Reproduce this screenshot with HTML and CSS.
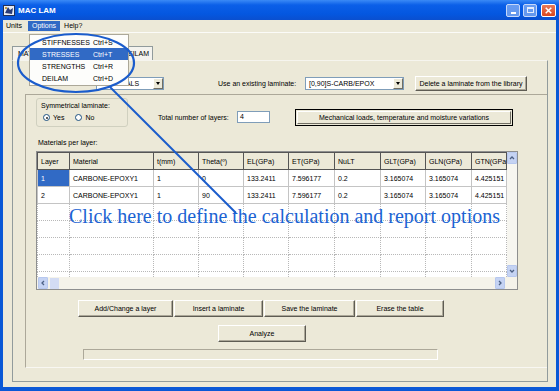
FILE: index.html
```html
<html>
  <head>
    <title>MAC LAM</title>
    <link rel="stylesheet" href="styles.css">
  </head>
  <body>
    <div class="window">
      <div class="titlebar">
        <svg class="app-icon" viewBox="0 0 12 11">
          <rect x="0.5" y="0.5" width="11" height="10" fill="#e8ecf4" stroke="#20305a"/>
          <path d="M2 8 L5 2 L7 5 L10 3 L9 9 Z" fill="#2a3c78"/>
          <rect x="2" y="2" width="2" height="2" fill="#c8a040"/>
        </svg>
        <span class="title">MAC LAM</span>
        <div class="caption-btns">
          <span class="cap-btn"><i class="cap-min"></i></span>
          <span class="cap-btn"><i class="cap-max"></i></span>
          <span class="cap-btn cap-close">
            <svg viewBox="0 0 14 13"><path d="M4 3.5 L10 9.5 M10 3.5 L4 9.5" stroke="#fff" stroke-width="1.6"/></svg>
          </span>
        </div>
      </div>

      <div class="client">
        <div class="menubar">
          <span class="menu-item">Units</span>
          <span class="menu-item active">Options</span>
          <span class="menu-item">Help?</span>
        </div>

        <div class="tabs">
          <span class="tab tab-mat">MATERIALS</span>
          <span class="tab tab-lam">LAMINATE</span>
          <span class="tab tab-del">DEILAM</span>
        </div>

        <div class="page">
          <div class="lib-row">
            <div class="combo combo-mat"><span>MATERIALS</span><i class="drop"></i></div>
            <span class="lib-label">Use an existing laminate:</span>
            <div class="combo combo-lam"><span>[0,90]S-CARB/EPOX</span><i class="drop"></i></div>
            <div class="btn btn-delete">Delete a laminate from the library</div>
          </div>

          <div class="frame">
            <div class="opts-row">
              <div class="groupbox">
                <div>Symmetrical laminate:</div>
                <div class="radios">
                  <span class="radio on"></span><span class="radio-text">Yes</span>
                  <span class="radio"></span><span class="radio-text">No</span>
                </div>
              </div>
              <span class="layers-label">Total number of layers:</span>
              <div class="textbox">4</div>
              <div class="btn btn-default"><span>Mechanical loads, temperature and moisture variations</span></div>
            </div>

            <div class="grid-label">Materials per layer:</div>

            <div class="grid">
              <div class="grid-body">
                <table>
                  <colgroup>
                    <col style="width:32px"><col style="width:84px"><col style="width:45px"><col style="width:45px"><col style="width:45px">
                    <col style="width:46px"><col style="width:46px"><col style="width:45px"><col style="width:46px"><col style="width:35px">
                  </colgroup>
                  <tr>
                    <th>Layer</th><th>Material</th><th>t(mm)</th><th>Theta(º)</th><th>EL(GPa)</th>
                    <th>ET(GPa)</th><th>NuLT</th><th>GLT(GPa)</th><th>GLN(GPa)</th><th>GTN(GPa)</th>
                  </tr>
                  <tr>
                    <td class="sel">1</td><td>CARBONE-EPOXY1</td><td>1</td><td>0</td><td>133.2411</td>
                    <td>7.596177</td><td>0.2</td><td>3.165074</td><td>3.165074</td><td>4.425151</td>
                  </tr>
                  <tr>
                    <td>2</td><td>CARBONE-EPOXY1</td><td>1</td><td>90</td><td>133.2411</td>
                    <td>7.596177</td><td>0.2</td><td>3.165074</td><td>3.165074</td><td>4.425151</td>
                  </tr>
                  <tr class="empty"><td></td><td></td><td></td><td></td><td></td><td></td><td></td><td></td><td></td><td></td></tr>
                  <tr class="empty"><td></td><td></td><td></td><td></td><td></td><td></td><td></td><td></td><td></td><td></td></tr>
                  <tr class="empty"><td></td><td></td><td></td><td></td><td></td><td></td><td></td><td></td><td></td><td></td></tr>
                  <tr class="empty"><td></td><td></td><td></td><td></td><td></td><td></td><td></td><td></td><td></td><td></td></tr>
                  <tr class="empty"><td></td><td></td><td></td><td></td><td></td><td></td><td></td><td></td><td></td><td></td></tr>
                </table>
                <div class="vscroll">
                  <span class="arrow"><svg viewBox="0 0 8 8"><path d="M2 5 L4 3 L6 5" stroke="#4d6185" stroke-width="1.3" fill="none"/></svg></span>
                  <span class="arrow"><svg viewBox="0 0 8 8"><path d="M2 3 L4 5 L6 3" stroke="#4d6185" stroke-width="1.3" fill="none"/></svg></span>
                </div>
              </div>
              <div class="hscroll">
                <span class="arrow"><svg viewBox="0 0 8 8"><path d="M5 2 L3 4 L5 6" stroke="#4d6185" stroke-width="1.3" fill="none"/></svg></span>
                <span class="thumb"></span>
                <span class="arrow arrow-right"><svg viewBox="0 0 8 8"><path d="M3 2 L5 4 L3 6" stroke="#4d6185" stroke-width="1.3" fill="none"/></svg></span>
              </div>
            </div>

            <div class="btn-row">
              <div class="btn w-add">Add/Change a layer</div>
              <div class="btn w-insert">Insert a laminate</div>
              <div class="btn w-save">Save the laminate</div>
              <div class="btn w-erase">Erase the table</div>
            </div>
            <div class="btn btn-analyze">Analyze</div>
            <div class="progress"></div>
          </div>
        </div>
      </div>

      <!-- open Options menu -->
      <div class="dropdown">
        <div class="drop-item"><span>STIFFNESSES</span><span>Ctrl+S</span></div>
        <div class="drop-item hot"><span>STRESSES</span><span>Ctrl+T</span></div>
        <div class="drop-item"><span>STRENGTHS</span><span>Ctrl+R</span></div>
        <div class="drop-item"><span>DEILAM</span><span>Ctrl+D</span></div>
      </div>

      <!-- annotation -->
      <svg class="callout-marks" viewBox="0 0 559 391">
        <ellipse cx="76" cy="63" rx="58" ry="29" fill="none" stroke="#1a5ccc" stroke-width="2.2"/>
        <line x1="110" y1="87" x2="236" y2="213" stroke="#1a5ccc" stroke-width="2"/>
      </svg>
      <div class="callout-text">Click here to define the calculation and report options</div>
    </div>
  </body>
</html>
```

FILE: styles.css
```css
* {
    box-sizing: border-box;
}

body {
    margin: 0;
    font-family: "Liberation Sans", Arial, sans-serif;
    font-size: 7px;
    color: #000;
}

.window {
    position: relative;
    width: 559px;
    height: 391px;
    display: flex;
    flex-direction: column;
    background: #0a58d6;
    overflow: hidden;
}

/* title bar */

.titlebar {
    height: 20px;
    flex: none;
    display: flex;
    align-items: center;
    padding: 0 3px 0 3px;
    background: linear-gradient(#3a8af6, #0b5fe8 25%, #0457e0 70%, #0a4fcf);
    color: #fff;
}

.app-icon {
    width: 12px;
    height: 11px;
    margin-right: 3px;
}

.title {
    font-weight: bold;
    font-size: 8px;
}

.caption-btns {
    margin-left: auto;
    display: flex;
    gap: 3px;
}

.cap-btn {
    width: 14px;
    height: 13px;
    border: 1px solid #c6d8fa;
    border-radius: 2px;
    background: rgba(180, 205, 250, 0.55);
    display: flex;
    align-items: center;
    justify-content: center;
}

.cap-min {
    width: 5px;
    height: 2px;
    background: #fff;
    margin-top: 5px;
}

.cap-max {
    width: 7px;
    height: 6px;
    border: 1px solid #e4ecfc;
    border-top-width: 2px;
}

.cap-close {
    margin-left: 1px;
    width: 15px;
    background: linear-gradient(#e87a5a, #d9461f);
    border-color: #fff;
}

.cap-close svg {
    width: 14px;
    height: 13px;
}

/* client area */

.client {
    flex: 1;
    margin: 0 3px 4px 3px;
    background: #ece9d8;
    display: flex;
    flex-direction: column;
}

.menubar {
    height: 13px;
    flex: none;
    display: flex;
    align-items: center;
    border-bottom: 1px solid #fbfbf8;
}

.menu-item {
    padding: 0 4px;
    line-height: 10px;
}

.menu-item:first-child {
    padding-left: 3px;
}

.menu-item.active {
    margin-left: 2px;
    background: #316ac5;
    color: #fff;
}

.tabs {
    margin: 13px 0 0 9px;
    height: 14px;
    display: flex;
    align-items: flex-end;
}

.tab {
    height: 14px;
    padding: 0 5px;
    line-height: 13px;
    border: 1px solid #919b9c;
    border-bottom: none;
    background: #f4f3ee;
    white-space: nowrap;
    overflow: hidden;
}

.tab-mat { width: 48px; }
.tab-lam { width: 59px; }

.tab-del {
    width: 34px;
    padding: 0 3px 0 0;
    text-align: right;
}

.page {
    flex: none;
    width: 536px;
    height: 322px;
    margin-left: 9px;
    border: 1px solid #919b9c;
    border-top-color: #f6f5ef;
}

.lib-row {
    display: flex;
    align-items: center;
    height: 15px;
    margin-top: 15px;
}

.combo {
    height: 13px;
    display: flex;
    align-items: center;
    padding-left: 3px;
    background: #fff;
    border: 1px solid #7f9db9;
}

.combo span {
    flex: 1;
}

.drop {
    width: 10px;
    height: 11px;
    background: #ece9d8;
    border: 1px solid;
    border-color: #fff #716f64 #716f64 #fff;
    position: relative;
}

.drop::after {
    content: "";
    position: absolute;
    left: 2px;
    top: 3px;
    border: 2px solid transparent;
    border-top: 3px solid #000;
}

.combo-mat {
    margin-left: 83px;
    width: 68px;
}

.lib-label {
    margin-left: 54px;
    width: 87px;
}

.combo-lam {
    width: 99px;
}

.btn {
    display: flex;
    align-items: center;
    justify-content: center;
    height: 17px;
    background: #ece9d8;
    border: 1px solid;
    border-color: #fff #5e5c53 #5e5c53 #fff;
    box-shadow: inset -1px -1px #aca899;
}

.btn-delete {
    margin-left: 11px;
    width: 112px;
    height: 15px;
}

.frame {
    margin: 3px 0 0 12px;
    height: 274px;
    border-top: 1px solid #aca899;
    border-left: 1px solid #aca899;
    border-bottom: 1px solid #f8f7f2;
}

.opts-row {
    display: flex;
    align-items: flex-start;
    margin: 3px 0 0 10px;
    height: 29px;
}

.groupbox {
    width: 92px;
    height: 29px;
    padding: 3px 0 0 4px;
    border: 1px solid #d0d0bf;
    border-radius: 3px;
}

.radios {
    display: flex;
    align-items: center;
    margin-top: 5px;
    padding-left: 2px;
}

.radio {
    width: 7px;
    height: 7px;
    border-radius: 50%;
    border: 1px solid #1c5180;
    background: #fff;
    position: relative;
}

.radio.on::after {
    content: "";
    position: absolute;
    left: 1.5px;
    top: 1.5px;
    width: 2px;
    height: 2px;
    border-radius: 50%;
    background: #2a2a2a;
}

.radio-text {
    margin: 0 11px 0 3px;
}

.layers-label {
    margin: 16px 0 0 30px;
    width: 79px;
}

.textbox {
    margin-top: 13px;
    width: 33px;
    height: 12px;
    padding: 1px 2px;
    background: #fff;
    border: 1px solid #7f9db9;
}

.btn-default {
    margin: 11px 0 0 25px;
    width: 218px;
    border: 1px solid #000;
    box-shadow: none;
    padding: 1px;
}

.btn-default span {
    flex: 1;
    height: 100%;
    display: flex;
    align-items: center;
    justify-content: center;
    border: 1px solid;
    border-color: #fff #716f64 #716f64 #fff;
}

.grid-label {
    margin: 12px 0 0 12px;
    height: 8px;
    line-height: 8px;
}

/* layer grid */

.grid {
    margin: 4px 0 0 10px;
    width: 482px;
    height: 139px;
    border: 1px solid #8e8f8f;
    background: #f5f3ea;
}

.grid-body {
    display: flex;
    height: 125px;
    overflow: hidden;
}

table {
    width: 469px;
    table-layout: fixed;
    border-collapse: collapse;
    background: #fff;
    font-size: 7px;
}

th, td {
    height: 17px;
    padding: 0 0 0 3px;
    text-align: left;
    font-weight: normal;
    white-space: nowrap;
    overflow: hidden;
}

th {
    background: #ece9d8;
    border: 1px solid #555;
}

td {
    border: 1px solid #c4c4c4;
}

.empty td {
    border-style: dotted;
    border-color: #b8b8b8;
}

td.sel {
    background: #316ac5;
    color: #fff;
}

.vscroll {
    width: 11px;
    display: flex;
    flex-direction: column;
    justify-content: space-between;
    background: #f7f6f0;
}

.arrow {
    width: 10px;
    height: 12px;
    display: flex;
    align-items: center;
    justify-content: center;
    background: #c5d3f3;
    border: 1px solid #b7c8ef;
    border-radius: 1px;
}

.arrow svg {
    width: 8px;
    height: 8px;
}

.hscroll {
    height: 12px;
    display: flex;
    align-items: center;
    padding-left: 1px;
}

.thumb {
    width: 9px;
    height: 11px;
    margin-left: 2px;
    background: #d3dcf4;
}

.arrow-right {
    margin-left: auto;
    margin-right: 12px;
}

.btn-row {
    display: flex;
    gap: 1px;
    margin: 10px 0 0 52px;
}

.w-add { width: 95px; }
.w-insert { width: 89px; }
.w-save { width: 91px; }
.w-erase { width: 88px; }

.btn-analyze {
    margin: 8px 0 0 192px;
    width: 88px;
}

.progress {
    margin: 7px 0 0 57px;
    width: 355px;
    height: 11px;
    border: 1px solid;
    border-color: #aca899 #fff #fff #aca899;
}

/* open menu */

.dropdown {
    position: absolute;
    left: 29px;
    top: 34px;
    width: 100px;
    padding: 1px 0;
    background: #fdfdfb;
    border: 1px solid #aca899;
}

.drop-item {
    display: grid;
    grid-template-columns: 51px auto;
    height: 12px;
    align-items: center;
    padding-left: 12px;
}

.drop-item.hot {
    background: #316ac5;
    color: #fff;
}

/* annotation over the window */

.callout-marks {
    position: absolute;
    left: 0;
    top: 0;
    width: 559px;
    height: 391px;
    pointer-events: none;
}

.callout-text {
    position: absolute;
    left: 69px;
    top: 206px;
    font-family: "Liberation Serif", "Times New Roman", serif;
    font-size: 20px;
    line-height: 20px;
    color: #1b63d3;
    white-space: nowrap;
}
```
